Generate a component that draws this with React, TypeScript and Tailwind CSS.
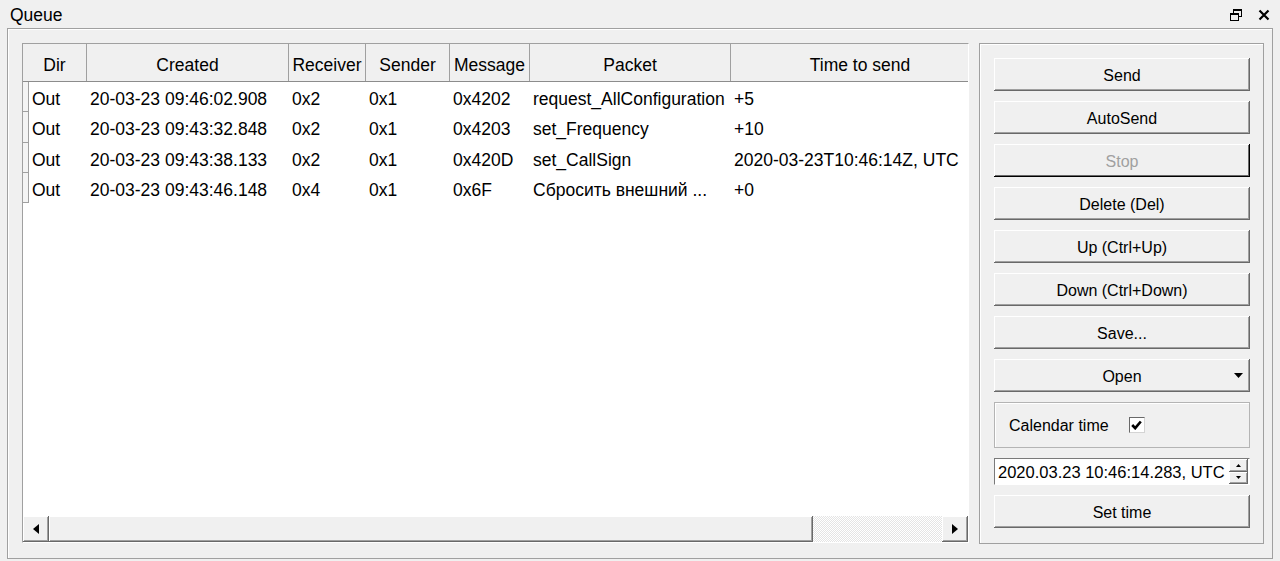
import React from "react";

type Row = {
  dir: string;
  created: string;
  receiver: string;
  sender: string;
  message: string;
  packet: string;
  time: string;
};

const rows: Row[] = [
  { dir: "Out", created: "20-03-23 09:46:02.908", receiver: "0x2", sender: "0x1", message: "0x4202", packet: "request_AllConfiguration", time: "+5" },
  { dir: "Out", created: "20-03-23 09:43:32.848", receiver: "0x2", sender: "0x1", message: "0x4203", packet: "set_Frequency", time: "+10" },
  { dir: "Out", created: "20-03-23 09:43:38.133", receiver: "0x2", sender: "0x1", message: "0x420D", packet: "set_CallSign", time: "2020-03-23T10:46:14Z, UTC" },
  { dir: "Out", created: "20-03-23 09:43:46.148", receiver: "0x4", sender: "0x1", message: "0x6F", packet: "Сбросить внешний ...", time: "+0" },
];

const raised =
  "shadow-[inset_-1px_-1px_0_#696969,inset_1px_1px_0_#ffffff,inset_-2px_-2px_0_#a0a0a0]";

function RestoreIcon() {
  return (
    <svg width="12" height="12" viewBox="0 0 12 12" aria-hidden="true">
      <rect x="3.5" y="0.5" width="8" height="7" fill="none" stroke="#000" />
      <rect x="3" y="0" width="9" height="2" fill="#000" />
      <rect x="0.5" y="4.5" width="8" height="7" fill="#f0f0f0" stroke="#000" />
      <rect x="0" y="4" width="9" height="2" fill="#000" />
    </svg>
  );
}

function CloseIcon() {
  return (
    <svg width="12" height="12" viewBox="0 0 12 12" aria-hidden="true">
      <path d="M1.5 1.5l9 9M10.5 1.5l-9 9" stroke="#000" strokeWidth="2.2" />
    </svg>
  );
}

function Button({ label, isDefault, menu }: { label: string; isDefault?: boolean; menu?: boolean }) {
  return (
    <div
      className={
        "relative flex h-[33px] w-[256px] shrink-0 items-center justify-center bg-[#f0f0f0] text-[16px] " +
        (isDefault
          ? "shadow-[inset_-1px_-1px_0_#000000,inset_1px_1px_0_#ffffff,inset_-2px_-2px_0_#696969] text-[#a0a0a0]"
          : raised + " text-black")
      }
    >
      <span className="pt-[3px]">{label}</span>
      {menu && (
        <svg className="absolute right-[7px] top-[14px]" width="9" height="5" viewBox="0 0 9 5" aria-hidden="true">
          <path d="M0 0h9L4.5 5z" fill="#000" />
        </svg>
      )}
    </div>
  );
}

function Arrow({ dir }: { dir: "left" | "right" }) {
  return (
    <div className={"flex h-[26px] w-[26px] shrink-0 items-center justify-center bg-[#f0f0f0] " + raised}>
      <svg width="6" height="10" viewBox="0 0 6 10" aria-hidden="true">
        <path d={dir === "left" ? "M6 0v10L0 5z" : "M0 0v10l6-5z"} fill="#000" />
      </svg>
    </div>
  );
}

export default function App() {
  const widths = ["w-[58px]", "w-[202px]", "w-[77px]", "w-[84px]", "w-[80px]", "w-[201px]"];

  return (
    <div className="flex h-[561px] w-[1280px] flex-col bg-[#f0f0f0] font-['Liberation_Sans',Arial,sans-serif] text-black">
      {/* title bar */}
      <div className="flex h-[28px] items-center justify-between pl-[10px] pr-[10px]">
        <span className="pt-[2px] text-[17.5px]">Queue</span>
        <div className="flex items-center gap-[16px] pt-[1px]">
          <RestoreIcon />
          <CloseIcon />
        </div>
      </div>

      {/* frame */}
      <div className="ml-[7px] flex h-[531px] w-[1266px] gap-[10px] border border-[#a0a0a0] pl-[14px] pt-[14px] shadow-[inset_1px_1px_0_#ffffff]">
        {/* table */}
        <div className="flex h-[500px] w-[947px] flex-col overflow-hidden border border-t-[#a0a0a0] border-l-[#a0a0a0] border-b-white border-r-white bg-white">
          <div className="flex h-[38px] shrink-0 overflow-hidden border-b border-[#8c8c8c] bg-[#f0f0f0] text-[17.5px]">
            {[
              ["Dir", "w-[64px]"],
              ["Created", "w-[202px]"],
              ["Receiver", "w-[77px]"],
              ["Sender", "w-[84px]"],
              ["Message", "w-[80px]"],
              ["Packet", "w-[201px]"],
            ].map(([label, w]) => (
              <div key={label} className={"flex shrink-0 items-center justify-center border-r border-[#a0a0a0] pt-[5px] " + w}>
                {label}
              </div>
            ))}
            <div className="flex w-[258px] shrink-0 items-center justify-center pt-[5px]">Time to send</div>
          </div>

          <div className="flex flex-1 flex-col text-[17.5px]">
            {rows.map((r, i) => {
              const cells = [r.dir, r.created, r.receiver, r.sender, r.message, r.packet];
              return (
                <div key={i} className="flex h-[30.3px]">
                  <div className="w-[6px] border-r border-b border-[#a0a0a0] bg-[#f4f4f4]" />
                  {cells.map((c, j) => (
                    <div key={j} className={"flex items-center whitespace-nowrap pl-[3px] pt-[4px] " + widths[j]}>
                      {c}
                    </div>
                  ))}
                  <div className="flex flex-1 items-center whitespace-nowrap pl-[3px] pt-[4px]">{r.time}</div>
                </div>
              );
            })}
          </div>

          {/* horizontal scrollbar */}
          <div className="flex h-[26px] shrink-0">
            <Arrow dir="left" />
            <div className={"h-[26px] w-[764px] shrink-0 bg-[#f0f0f0] " + raised} />
            <div className="h-[26px] flex-1 bg-[image:repeating-conic-gradient(#ffffff_0%_25%,#e4e4e4_0%_50%)] bg-[length:2px_2px]" />
            <Arrow dir="right" />
          </div>
        </div>

        {/* side panel */}
        <div className="flex h-[501px] w-[285px] flex-col gap-[10px] border border-[#a0a0a0] pl-[14px] pt-[14px] shadow-[inset_1px_1px_0_#ffffff]">
          <Button label="Send" />
          <Button label="AutoSend" />
          <Button label="Stop" isDefault />
          <Button label="Delete (Del)" />
          <Button label="Up (Ctrl+Up)" />
          <Button label="Down (Ctrl+Down)" />
          <Button label="Save..." />
          <Button label="Open" menu />

          <div className="flex h-[46px] w-[256px] items-center gap-[20px] border border-[#b4b4b4] pl-[14px] text-[16px] shadow-[inset_1px_1px_0_#ffffff]">
            <span className="pt-[2px]">Calendar time</span>
            <div className="flex h-[16px] w-[16px] items-center justify-center border border-t-[#696969] border-l-[#696969] border-b-[#d4d4d4] border-r-[#d4d4d4] bg-white">
              <svg width="11" height="10" viewBox="0 0 11 10" aria-hidden="true">
                <path d="M1.2 5l3 3.2L9.8 1.5" fill="none" stroke="#000" strokeWidth="2.6" />
              </svg>
            </div>
          </div>

          <div className="flex h-[27px] w-[256px] items-center border border-t-[#7a7a7a] border-l-[#7a7a7a] border-b-white border-r-white bg-white pl-[3px] pr-[1px] text-[16.5px]">
            <span className="flex-1 whitespace-nowrap pt-[2px]">2020.03.23 10:46:14.283, UTC</span>
            <div className="flex h-[25px] w-[19px] flex-col">
              <div className={"flex h-[12.5px] items-center justify-center bg-[#f0f0f0] " + raised}>
                <svg width="5" height="3" viewBox="0 0 5 3" aria-hidden="true">
                  <path d="M0 3h5L2.5 0z" fill="#000" />
                </svg>
              </div>
              <div className={"flex h-[12.5px] items-center justify-center bg-[#f0f0f0] " + raised}>
                <svg width="5" height="3" viewBox="0 0 5 3" aria-hidden="true">
                  <path d="M0 0h5L2.5 3z" fill="#000" />
                </svg>
              </div>
            </div>
          </div>

          <Button label="Set time" />
        </div>
      </div>
    </div>
  );
}
